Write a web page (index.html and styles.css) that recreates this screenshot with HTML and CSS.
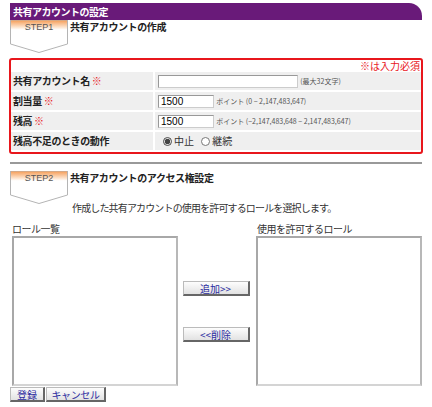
FILE: index.html
```html
<!DOCTYPE html>
<html lang="ja">
<head>
  <meta charset="UTF-8" />
  <title>共有アカウントの設定</title>
  <link rel="stylesheet" href="styles.css">
</head>
<body>
  <div class="page">
    <div class="page-title">共有アカウントの設定</div>

    <div class="step">
      <svg class="step-tab" width="58" height="33" viewBox="0 0 58 33">
        <defs>
          <linearGradient id="tabGrad1" x1="0" y1="0" x2="0" y2="1">
            <stop offset="0" stop-color="#f59a52"/>
            <stop offset="0.22" stop-color="#fde3cc"/>
            <stop offset="0.3" stop-color="#ffffff"/>
          </linearGradient>
        </defs>
        <polygon points="0.5,0 57.5,0 57.5,24 29,32.5 0.5,24" fill="url(#tabGrad1)" stroke="#b4b4b4"/>
        <text x="29" y="10" text-anchor="middle" class="step-label">STEP1</text>
      </svg>
      <h2 class="step-title">共有アカウントの作成</h2>
    </div>

    <div class="form-box">
      <div class="required-note">※は入力必須</div>
      <table class="form-table">
        <tr>
          <th>共有アカウント名 <span class="req">※</span></th>
          <td><input type="text" class="text-long"> <span class="hint">(最大32文字)</span></td>
        </tr>
        <tr>
          <th>割当量 <span class="req">※</span></th>
          <td><input type="text" class="text-short" value="1500"> <span class="hint">ポイント (0 − 2,147,483,647)</span></td>
        </tr>
        <tr>
          <th>残高 <span class="req">※</span></th>
          <td><input type="text" class="text-short" value="1500"> <span class="hint">ポイント (−2,147,483,648 − 2,147,483,647)</span></td>
        </tr>
        <tr>
          <th>残高不足のときの動作</th>
          <td class="radios">
            <label><input type="radio" name="action" checked>中止</label>
            <label><input type="radio" name="action">継続</label>
          </td>
        </tr>
      </table>
    </div>

    <hr class="divider">

    <div class="step step2">
      <svg class="step-tab" width="58" height="33" viewBox="0 0 58 33">
        <defs>
          <linearGradient id="tabGrad2" x1="0" y1="0" x2="0" y2="1">
            <stop offset="0" stop-color="#f59a52"/>
            <stop offset="0.22" stop-color="#fde3cc"/>
            <stop offset="0.3" stop-color="#ffffff"/>
          </linearGradient>
        </defs>
        <polygon points="0.5,0 57.5,0 57.5,24 29,32.5 0.5,24" fill="url(#tabGrad2)" stroke="#b4b4b4"/>
        <text x="29" y="10" text-anchor="middle" class="step-label">STEP2</text>
      </svg>
      <h2 class="step-title">共有アカウントのアクセス権設定</h2>
    </div>

    <p class="desc">作成した共有アカウントの使用を許可するロールを選択します。</p>

    <div class="roles">
      <div class="role-col">
        <div class="role-head">ロール一覧</div>
        <select class="role-list" multiple></select>
      </div>
      <div class="role-buttons">
        <button class="btn btn-move">追加&gt;&gt;</button>
        <button class="btn btn-move">&lt;&lt;削除</button>
      </div>
      <div class="role-col">
        <div class="role-head">使用を許可するロール</div>
        <select class="role-list" multiple></select>
      </div>
    </div>

    <div class="actions">
      <button class="btn btn-save">登録</button>
      <button class="btn btn-cancel">キャンセル</button>
    </div>
  </div>
</body>
</html>
```

FILE: styles.css
```css
* { box-sizing: border-box; }
body {
  margin: 0;
  padding: 0;
  font-family: "Noto Sans CJK JP", "Noto Sans", sans-serif;
  font-size: 10px;
  color: #333;
  background: #fff;
}
.page {
  padding: 3px 10px 0 10px;
  width: 432px;
}
.page-title {
  height: 17px;
  line-height: 17px;
  padding-left: 3px;
  background: #691a79;
  color: #fff;
  font-weight: bold;
  font-size: 10px;
  letter-spacing: -0.5px;
  border-radius: 0 13px 0 0;
}
.step {
  display: flex;
  align-items: flex-start;
  height: 38px;
}
.step-tab { display: block; flex: none; }
.step-label {
  font-family: "Liberation Sans", Arial, sans-serif;
  font-size: 9px;
  fill: #555;
}
.step-title {
  margin: 0 0 0 2px;
  font-size: 10px;
  font-weight: bold;
  line-height: 14px;
  letter-spacing: -0.4px;
  color: #222;
}
.form-box {
  border: 2px solid #e8161c;
  border-radius: 3px;
  width: 414px;
  margin-left: -1px;
}
.required-note {
  text-align: right;
  color: #e8161c;
  font-size: 10px;
  line-height: 11px;
  height: 10px;
  padding-right: 1px;
}
.form-table {
  width: 100%;
  border-collapse: separate;
  border-spacing: 0 2px;
}
.form-table th,
.form-table td {
  background: #efefef;
  height: 18px;
  line-height: 14px;
  padding: 0 2px;
  vertical-align: middle;
  white-space: nowrap;
}
.form-table th {
  width: 142px;
  text-align: left;
  font-size: 10px;
  letter-spacing: -0.4px;
  color: #222;
}
.form-table td {
  border-left: 2px solid #fff;
  padding-left: 3px;
}
.req { color: #e8161c; font-weight: bold; }
.form-table input[type="text"] {
  height: 13px;
  border: 1px solid #999;
  border-right-color: #ccc;
  border-bottom-color: #ccc;
  font-family: "Liberation Sans", Arial, sans-serif;
  font-size: 10px;
  padding: 0 2px;
  margin: 0;
  vertical-align: middle;
}
.text-long { width: 140px; }
.text-short { width: 56px; }
.hint {
  font-size: 7px;
  color: #555;
  vertical-align: middle;
}
.radios label {
  font-size: 10px;
}
.radios input {
  width: 9px;
  height: 9px;
  margin: 0 2px 0 5px;
  vertical-align: -1px;
  accent-color: #444;
}
.divider {
  border: none;
  border-top: 2px solid #999;
  margin: 8px 0 7px 0;
}
.step2 { height: 31px; }
.desc {
  margin: 0 0 9px 62px;
  font-size: 10px;
  line-height: 12px;
  letter-spacing: -0.85px;
  color: #333;
}
.roles {
  display: flex;
  align-items: flex-end;
}
.role-col { display: flex; flex-direction: column; }
.role-head {
  font-size: 10px;
  line-height: 12px;
  letter-spacing: -0.5px;
  padding-left: 2px;
  margin-bottom: 1px;
}
.role-col:last-child .role-head { padding-left: 3px; }
.role-list {
  width: 166px;
  height: 150px;
  margin: 0 0 0 2px;
  border: 2px solid #a8a8a8;
  border-bottom-color: #d4d4d4;
  border-right-color: #b8b8b8;
  border-radius: 0;
  background: #fff;
  outline: none;
}
.role-buttons {
  width: 77px;
  height: 150px;
  display: flex;
  flex-direction: column;
  align-items: center;
  padding-top: 45px;
  gap: 31px;
}
.btn {
  font-family: "Noto Sans CJK JP", "Noto Sans", sans-serif;
  font-size: 10px;
  color: #2b2ba0;
  height: 15px;
  line-height: 11px;
  padding: 0 4px;
  background: linear-gradient(#fdfdfd, #e2e2e2);
  border: 1px solid #bbb;
  border-right: 2px solid #666;
  border-bottom: 2px solid #666;
  border-radius: 0;
  white-space: nowrap;
  cursor: pointer;
}
.btn-move { width: 67px; }
.actions {
  display: flex;
  gap: 1px;
  margin-top: 1px;
}
.btn-save { width: 35px; padding: 0; }
.btn-cancel { width: 60px; padding: 0; letter-spacing: -0.4px; }
```
